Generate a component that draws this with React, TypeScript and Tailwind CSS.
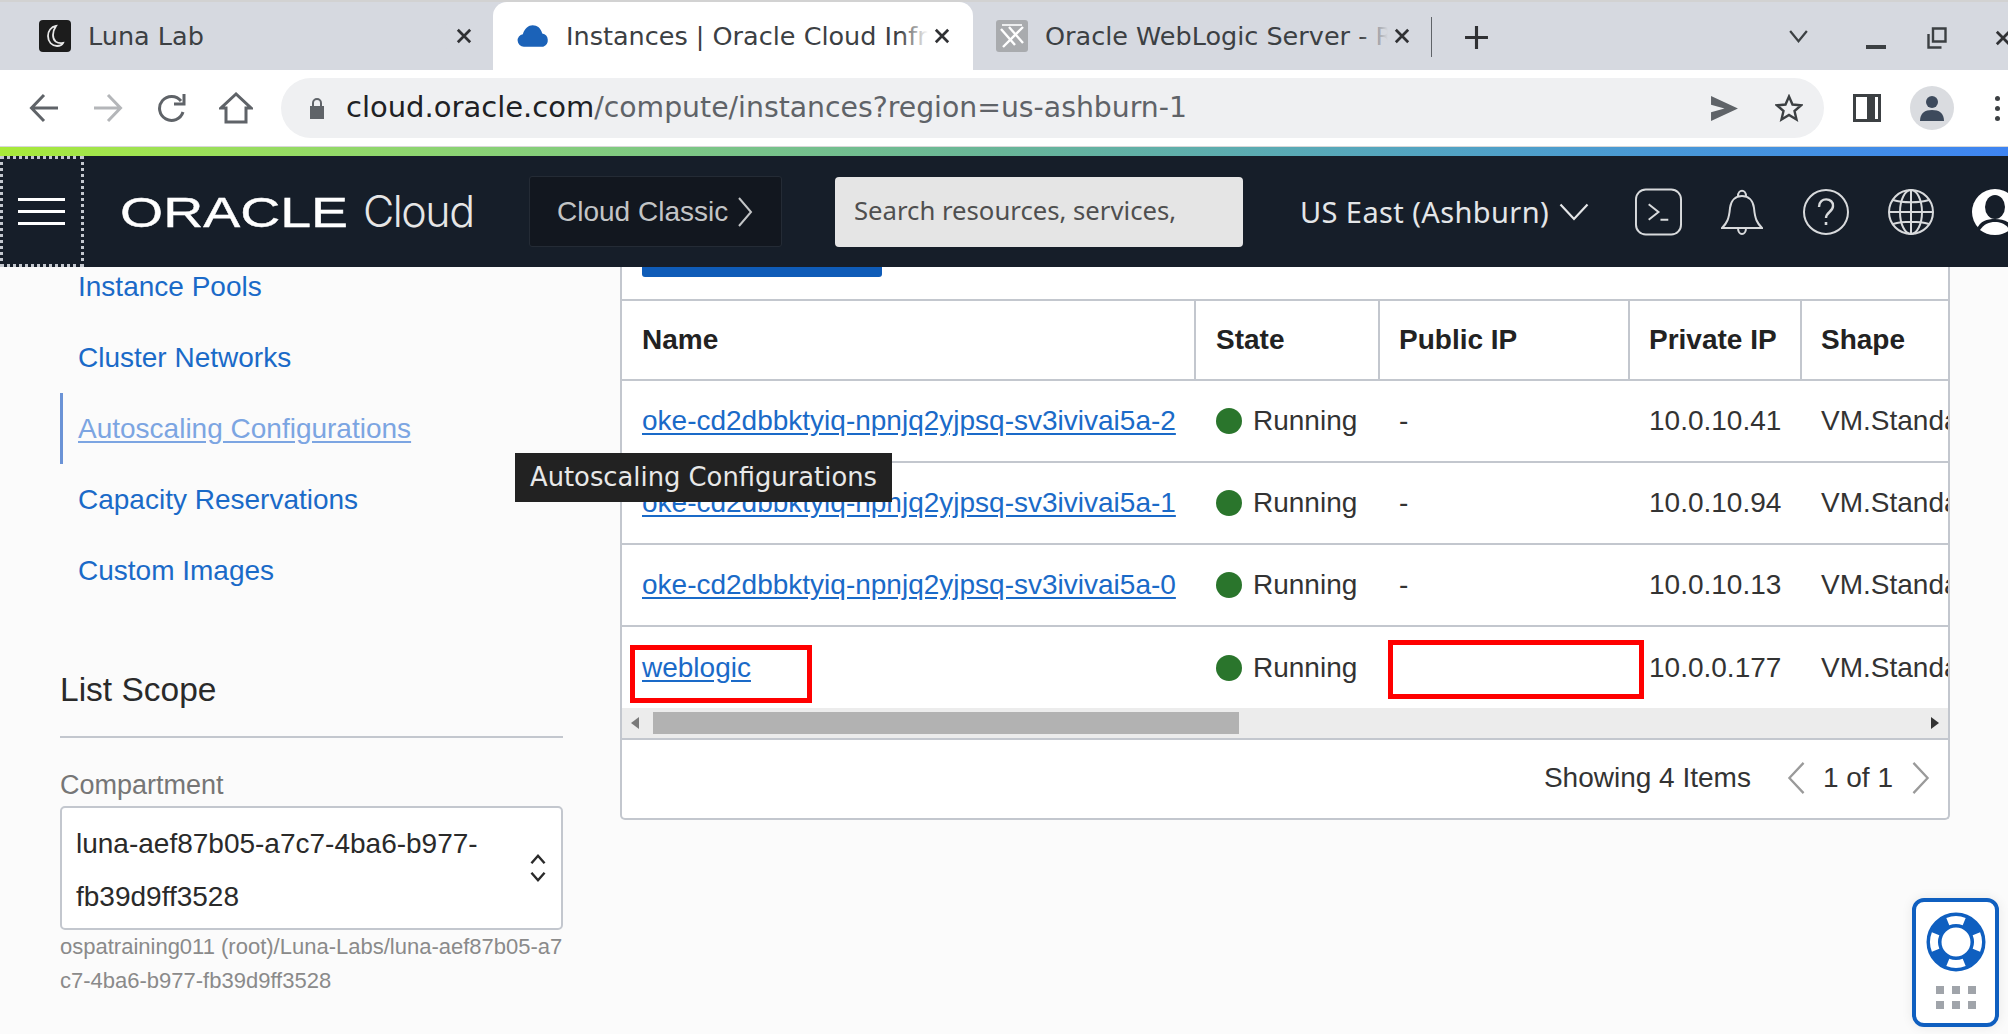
// App.tsx
import React from 'react';

const rows = [
  { name: 'oke-cd2dbbktyiq-npnjq2yjpsq-sv3ivivai5a-2', pub: '-', priv: '10.0.10.41' },
  { name: 'oke-cd2dbbktyiq-npnjq2yjpsq-sv3ivivai5a-1', pub: '-', priv: '10.0.10.94' },
  { name: 'oke-cd2dbbktyiq-npnjq2yjpsq-sv3ivivai5a-0', pub: '-', priv: '10.0.10.13' },
  { name: 'weblogic', pub: '', priv: '10.0.0.177' },
];

const gridCols = 'grid grid-cols-[572px_184px_250px_172px_148px]';

const Tab: React.FC<{ icon: React.ReactNode; title: string; active?: boolean; className: string }> = ({
  icon,
  title,
  active,
  className,
}) => (
  <div className={`relative flex h-full items-center ${className} ${active ? 'rounded-t-[14px] bg-white' : ''}`}>
    <div className="flex w-[34px] shrink-0 items-center justify-center">{icon}</div>
    <div className="relative ml-[16px] flex-1 overflow-hidden whitespace-nowrap text-[25.5px] text-[#3c4043]">
      {title}
      <div
        className={`absolute inset-y-0 right-0 w-[28px] bg-gradient-to-r from-transparent ${
          active ? 'to-white' : 'to-[#d6d9e0]'
        }`}
      />
    </div>
    <svg viewBox="0 0 16 16" className="ml-[5px] h-[18px] w-[18px] shrink-0 text-[#303134]" fill="none" stroke="currentColor" strokeWidth="2.4">
      <path d="M2.5 2.5l11 11M13.5 2.5l-11 11" />
    </svg>
  </div>
);

const LunaIcon = () => (
  <svg viewBox="0 0 32 32" className="h-[32px] w-[32px]">
    <rect width="32" height="32" rx="4" fill="#1c1c1c" />
    <path d="M17 6c-5 1-8 5-8 10 0 6 4 10 9 10 3 0 5-1 6-3-6 1-10-2-10-8 0-3 1-6 3-9z" fill="none" stroke="#e8e8e8" strokeWidth="1.8" />
  </svg>
);

const CloudIcon = () => (
  <svg viewBox="0 0 34 24" className="h-[24px] w-[33px]">
    <path d="M7 23a6.5 6.5 0 0 1-1-12.9C8 4 12 1 16 1c5 0 8.5 3 10 8.5a7 7 0 0 1 1 13.5z" fill="#1b62b8" />
  </svg>
);

const WlsIcon = () => (
  <svg viewBox="0 0 32 32" className="h-[32px] w-[32px]">
    <rect width="32" height="32" rx="3" fill="#a9abae" />
    <path d="M5 9l14 16M13 7l14 16M27 7L7 27" fill="none" stroke="#ffffff" strokeWidth="2.4" />
    <path d="M6 5h20" stroke="#ffffff" strokeWidth="1.6" />
  </svg>
);

const Browser = () => (
  <div className="font-['DejaVu_Sans',sans-serif]">
    {/* tab strip */}
    <div className="flex h-[70px] items-stretch border-t-2 border-[#d2d2d2] bg-[#d6d9e0]">
      <Tab icon={<LunaIcon />} title="Luna Lab" className="ml-[38px] w-[435px]" />
      <Tab icon={<CloudIcon />} title="Instances | Oracle Cloud Infrastructure" active className="ml-[20px] w-[480px] pl-[23px] pr-[22px]" />
      <Tab icon={<WlsIcon />} title="Oracle WebLogic Server - Release Notes" className="ml-[22px] w-[416px]" />
      <div className="ml-[20px] mt-[15px] h-[40px] w-px bg-[#5f6368]" />
      <svg viewBox="0 0 24 24" className="ml-[32px] mt-[23px] h-[25px] w-[25px]" fill="none" stroke="#303134" strokeWidth="3">
        <path d="M12 1v22M1 12h22" />
      </svg>
      <div className="flex-1" />
      <svg viewBox="0 0 20 14" className="mr-[58px] mt-[28px] h-[13px] w-[19px]" fill="none" stroke="#3c4043" strokeWidth="2.4">
        <path d="M1 1l9 11 9-11" />
      </svg>
      <div className="mr-[41px] mt-[43px] h-[4px] w-[20px] bg-[#3c4043]" />
      <svg viewBox="0 0 20 22" className="mr-[47px] mt-[25px] h-[22px] w-[20px]" fill="none" stroke="#3c4043" strokeWidth="2.4">
        <path d="M6 1.5h12.5v13H6zM1.5 7v13.5h13" />
      </svg>
      <svg viewBox="0 0 16 16" className="mr-[-4px] mt-[27px] h-[18px] w-[18px]" fill="none" stroke="#303134" strokeWidth="2.4">
        <path d="M2.5 2.5l11 11M13.5 2.5l-11 11" />
      </svg>
    </div>
    {/* toolbar */}
    <div className="flex h-[77px] items-center border-b border-[#d8d8d8] bg-white">
      <svg viewBox="0 0 30 30" className="ml-[29px] h-[30px] w-[30px]" fill="none" stroke="#5f6368" strokeWidth="3">
        <path d="M29 15H3M15 2L2.5 15 15 28" />
      </svg>
      <svg viewBox="0 0 30 30" className="ml-[34px] h-[30px] w-[30px]" fill="none" stroke="#b4b6b9" strokeWidth="3">
        <path d="M1 15h26M15 2l12.5 13L15 28" />
      </svg>
      <svg viewBox="0 0 30 30" className="ml-[34px] h-[30px] w-[30px]" fill="none" stroke="#5f6368" strokeWidth="3">
        <path d="M26 19a12 12 0 1 1-2-11" />
        <path d="M27 1v10H17" />
      </svg>
      <svg viewBox="0 0 34 32" className="ml-[32px] h-[32px] w-[34px]" fill="none" stroke="#5f6368" strokeWidth="3">
        <path d="M17 2L2 16h5v14h20V16h5z" />
      </svg>
      <div className="ml-[28px] flex h-[60px] w-[1543px] items-center rounded-full bg-[#eff0f2] pl-[28px]">
        <svg viewBox="0 0 16 22" className="h-[22px] w-[16px]">
          <path d="M1 9h14v13H1z" fill="#5f6368" />
          <path d="M4 9V6a4 4 0 0 1 8 0v3" fill="none" stroke="#5f6368" strokeWidth="2" />
        </svg>
        <div className="ml-[21px] whitespace-nowrap text-[29px] text-[#202124]">
          cloud.oracle.com<span className="text-[28.3px] text-[#5f6368]">/compute/instances?region=us-ashburn-1</span>
        </div>
        <div className="flex-1" />
        <svg viewBox="0 0 28 26" className="h-[25px] w-[27px]">
          <path d="M0 0l28 13L0 26v-9l14-4-14-4z" fill="#5f6368" />
        </svg>
        <svg viewBox="0 0 28 28" className="ml-[37px] h-[28px] w-[28px]" fill="none" stroke="#3c4043" strokeWidth="2.4">
          <path d="M14 2.5l3.5 8 8.5.8-6.5 5.7 2 8.5-7.5-4.5-7.5 4.5 2-8.5L2 11.3l8.5-.8z" />
        </svg>
        <div className="w-[21px]" />
      </div>
      <svg viewBox="0 0 28 28" className="ml-[29px] h-[28px] w-[28px]" fill="none" stroke="#3c4043" strokeWidth="3">
        <path d="M1.5 1.5h25v25h-25z" />
        <path d="M18 1.5v25" strokeWidth="8" />
      </svg>
      <div className="ml-[29px] flex h-[44px] w-[44px] items-center justify-center rounded-full bg-[#dadce0]">
        <svg viewBox="0 0 24 26" className="h-[26px] w-[24px]">
          <circle cx="12" cy="7" r="6" fill="#3d4a5c" />
          <path d="M0 26c0-8 5-11 12-11s12 3 12 11z" fill="#3d4a5c" />
        </svg>
      </div>
      <div className="ml-[41px] flex flex-col gap-[5px]">
        <div className="h-[5px] w-[5px] rounded-full bg-[#3c4043]" />
        <div className="h-[5px] w-[5px] rounded-full bg-[#3c4043]" />
        <div className="h-[5px] w-[5px] rounded-full bg-[#3c4043]" />
      </div>
    </div>
  </div>
);

const Header = () => (
  <div className="relative z-10 font-['Liberation_Sans',sans-serif]">
    <div className="h-[9px] bg-gradient-to-r from-[#a8ea38] via-[#68b598] to-[#3e84f2]" />
    <div className="flex h-[111px] items-center bg-[#161e29]">
      <div className="flex h-full w-[84px] shrink-0 flex-col items-center justify-center gap-[9px] border-[3px] border-dotted border-[#c4c8cf] pr-[2px]">
        <div className="h-[3px] w-[47px] bg-white" />
        <div className="h-[3px] w-[47px] bg-white" />
        <div className="h-[3px] w-[47px] bg-white" />
      </div>
      <svg viewBox="0 0 240 40" className="ml-[36px] h-[40px] w-[240px] shrink-0">
        <text x="0" y="35" fontFamily="Liberation Sans" fontSize="42" fill="#ffffff" stroke="#ffffff" strokeWidth="0.4" textLength="228" lengthAdjust="spacingAndGlyphs">
          ORACLE
        </text>
      </svg>
      <div className="ml-[3px] w-[112px] shrink-0 whitespace-nowrap font-['Inter',sans-serif] text-[43px] font-light tracking-[-1.5px] text-[#e6e6e6]">Cloud</div>
      <div className="ml-[54px] flex h-[71px] w-[253px] shrink-0 items-center rounded-[3px] border border-[#242b35] bg-[#12171f] pl-[27px] text-[28px] text-[#c2c4c6]">
        Cloud Classic
        <svg viewBox="0 0 16 32" className="ml-[9px] h-[32px] w-[16px]" fill="none" stroke="#c2c4c6" strokeWidth="2">
          <path d="M2 2l12 14L2 30" />
        </svg>
      </div>
      <div className="ml-[53px] flex h-[70px] w-[408px] shrink-0 items-center whitespace-nowrap rounded-[4px] bg-[#e5e5e5] pl-[19px] font-['Noto_Sans',sans-serif] text-[25.7px] text-[#4f4f4f]">
        Search resources, services,
      </div>
      <div className="ml-[57px] shrink-0 whitespace-nowrap font-['Noto_Sans',sans-serif] text-[29px] tracking-[0.4px] text-[#e4e6e8]">US East (Ashburn)</div>
      <svg viewBox="0 0 30 18" className="ml-[10px] h-[18px] w-[30px] shrink-0" fill="none" stroke="#e4e6e8" strokeWidth="2.2">
        <path d="M1.5 1.5L15 16 28.5 1.5" />
      </svg>
      <svg viewBox="0 0 48 48" className="ml-[46px] h-[48px] w-[47px] shrink-0" fill="none" stroke="#d8dadc" strokeWidth="2">
        <rect x="1" y="1" width="46" height="46" rx="10" />
        <path d="M14 16l10 8-10 8M26 32h8" />
      </svg>
      <svg viewBox="0 0 42 46" className="ml-[39px] h-[46px] w-[42px] shrink-0" fill="none" stroke="#d8dadc" strokeWidth="2">
        <path d="M1 39c5-5 7-9 8-20 1-8 6-12 12-12s11 4 12 12c1 11 3 15 8 20z" />
        <path d="M17 7c0-7 8-7 8 0M17 39c0 8 8 8 8 0" />
      </svg>
      <svg viewBox="0 0 46 46" className="ml-[40px] h-[46px] w-[46px] shrink-0" fill="none" stroke="#d8dadc" strokeWidth="2">
        <circle cx="23" cy="23" r="22" />
        <path d="M16 18c0-11 15-9 14-1 0 6-7 6-7 12" strokeWidth="2.4" />
        <path d="M23 33v3" strokeWidth="2.6" />
      </svg>
      <svg viewBox="0 0 46 46" className="ml-[39px] h-[46px] w-[46px] shrink-0" fill="none" stroke="#d8dadc" strokeWidth="2">
        <circle cx="23" cy="23" r="22" />
        <ellipse cx="23" cy="23" rx="11" ry="22" />
        <path d="M23 1v44M1 23h44M5 11c10 3 26 3 36 0M5 35c10-3 26-3 36 0" />
      </svg>
      <svg viewBox="0 0 46 46" className="ml-[38px] h-[46px] w-[46px] shrink-0">
        <circle cx="23" cy="23" r="23" fill="#ffffff" />
        <ellipse cx="23" cy="18" rx="10" ry="12" fill="#161e29" />
        <path d="M5 40c3-8 10-10 18-10s15 2 18 10c-5 5-11 6-18 6s-13-1-18-6z" fill="#161e29" />
        <path d="M8 41c4-6 9-8 15-8s11 2 15 8c-4 3-9 5-15 5s-11-2-15-5z" fill="#ffffff" />
      </svg>
    </div>
  </div>
);

const navItems = ['Instance Pools', 'Cluster Networks', 'Autoscaling Configurations', 'Capacity Reservations', 'Custom Images'];

const Sidebar = () => (
  <div className="w-[620px] shrink-0 pl-[60px]">
    <div className="-mt-[16px]">
      {navItems.map((item) =>
        item === 'Autoscaling Configurations' ? (
          <div key={item} className="flex h-[71px] items-center border-l-[3px] border-[#6b93d6] pl-[15px] text-[#7ca5e2] underline underline-offset-[3px]">
            {item}
          </div>
        ) : (
          <div key={item} className="flex h-[71px] items-center pl-[18px] text-[#1a6ac8]">
            {item}
          </div>
        ),
      )}
    </div>
    <div className="w-[503px]">
      <div className="mt-[65px] border-b-2 border-[#c3c7ce] pb-[28px] text-[33.5px] leading-[37px] text-[#2a2a2a]">List Scope</div>
      <div className="mt-[30px] text-[27px] leading-[34px] text-[#767676]">Compartment</div>
      <div className="mt-[4px] flex h-[124px] items-center justify-between rounded-[5px] border-2 border-[#c3c7ce] bg-white pl-[14px] pr-[14px]">
        <div className="w-[440px] pt-[3px] leading-[53px] text-[#2a2a2a]">luna-aef87b05-a7c7-4ba6-b977-fb39d9ff3528</div>
        <svg viewBox="0 0 18 32" className="h-[30px] w-[18px]" fill="none" stroke="#2a2a2a" strokeWidth="2.6">
          <path d="M2 11l7-8 7 8M2 21l7 8 7-8" />
        </svg>
      </div>
      <div className="break-all text-[22px] leading-[34px] text-[#8a8a8a]">
        ospatraining011 (root)/Luna-Labs/luna-aef87b05-a7c7-4ba6-b977-fb39d9ff3528
      </div>
    </div>
  </div>
);

const LifeRing = () => (
  <svg viewBox="0 0 60 60" className="h-[60px] w-[60px]">
    <circle cx="30" cy="30" r="22" fill="none" stroke="#0f5fc0" strokeWidth="15" />
    <g fill="none" stroke="#ffffff" strokeWidth="8">
      <path d="M21.8 9.6a22 22 0 0 1 16.4 0" />
      <path d="M50.4 21.8a22 22 0 0 1 0 16.4" />
      <path d="M38.2 50.4a22 22 0 0 1-16.4 0" />
      <path d="M9.6 38.2a22 22 0 0 1 0-16.4" />
    </g>
  </svg>
);

const InstancesTable = () => (
  <div className="mr-[58px] h-[553px] flex-1 overflow-hidden rounded-b-[5px] border-x-2 border-b-2 border-[#c3c7ce] bg-white">
    <div className="ml-[20px] h-[10px] w-[240px] rounded-b-[3px] bg-[#0f5cb8]" />
    <div className="h-[22px]" />
    <div className={`${gridCols} h-[82px] border-y-2 border-[#c3c7ce] font-bold text-[#222222]`}>
      <div className="flex items-center pl-[20px]">Name</div>
      <div className="flex items-center border-l-2 border-[#c3c7ce] pl-[20px]">State</div>
      <div className="flex items-center border-l-2 border-[#c3c7ce] pl-[19px]">Public IP</div>
      <div className="flex items-center border-l-2 border-[#c3c7ce] pl-[19px]">Private IP</div>
      <div className="flex items-center whitespace-nowrap border-l-2 border-[#c3c7ce] pl-[19px]">Shape</div>
    </div>
    {rows.map((row, i) => (
      <div key={row.name} className={`${gridCols} items-center text-[#333333] ${i < 3 ? 'h-[82px] border-b-2 border-[#c3c7ce]' : 'h-[81px]'}`}>
        <div className="pl-[20px] text-[#1a6ac8] underline underline-offset-[3px]">{row.name}</div>
        <div className="flex items-center pl-[22px]">
          <div className="h-[26px] w-[26px] rounded-full bg-[#2a752c]" />
          <span className="ml-[11px]">Running</span>
        </div>
        <div className="pl-[21px]">{row.pub}</div>
        <div className="pl-[21px]">{row.priv}</div>
        <div className="whitespace-nowrap pl-[21px]">VM.Standard.E4.Flex</div>
      </div>
    ))}
    {/* horizontal scrollbar */}
    <div className="flex h-[32px] items-center border-b-2 border-[#c3c7ce] bg-[#ececec] px-[9px]">
      <svg viewBox="0 0 8 12" className="h-[12px] w-[8px]">
        <path d="M8 0v12L0 6z" fill="#7a7a7a" />
      </svg>
      <div className="ml-[14px] h-[22px] w-[586px] bg-[#b2b2b2]" />
      <div className="flex-1" />
      <svg viewBox="0 0 8 12" className="h-[12px] w-[8px]">
        <path d="M0 0v12l8-6z" fill="#333333" />
      </svg>
    </div>
    <div className="flex h-[76px] items-center justify-end pr-[17px] text-[#333333]">
      <span>Showing 4 Items</span>
      <svg viewBox="0 0 20 36" className="ml-[35px] h-[34px] w-[20px]" fill="none" stroke="#9a9a9a" strokeWidth="2.4">
        <path d="M18 2L3 18l15 16" />
      </svg>
      <span className="ml-[17px]">1 of 1</span>
      <svg viewBox="0 0 20 36" className="ml-[18px] h-[34px] w-[20px]" fill="none" stroke="#9a9a9a" strokeWidth="2.4">
        <path d="M2 2l15 16L2 34" />
      </svg>
    </div>
  </div>
);

const HelpWidget = () => (
  <div className="absolute left-[1912px] top-[631px] flex h-[129px] w-[87px] flex-col items-center rounded-[12px] border-[4px] border-[#0f5fc0] bg-white pt-[10px] shadow-[0_0_12px_rgba(0,0,0,0.08)]">
    <LifeRing />
    <div className="mt-[14px] grid grid-cols-3 gap-x-[8px] gap-y-[7px]">
      {[0, 1, 2, 3, 4, 5].map((n) => (
        <div key={n} className="h-[8px] w-[8px] bg-[#a0a4aa]" />
      ))}
    </div>
  </div>
);

const App: React.FC = () => {
  return (
    <div className="flex h-[1034px] w-[2008px] flex-col overflow-hidden bg-[#fbfbfb]">
      <Browser />
      <Header />
      <div className="relative flex flex-1 text-[28px] font-['Liberation_Sans',sans-serif]">
        <Sidebar />
        <InstancesTable />
        {/* tooltip */}
        <div className="absolute left-[515px] top-[186px] flex h-[49px] w-[377px] items-center justify-center whitespace-nowrap bg-[#222222] font-['DejaVu_Sans',sans-serif] text-[25.8px] text-[#e8e8e8]">
          Autoscaling Configurations
        </div>
        {/* red annotation boxes */}
        <div className="absolute left-[630px] top-[378px] h-[58px] w-[182px] border-[5px] border-[#ff0000]" />
        <div className="absolute left-[1388px] top-[373px] h-[59px] w-[256px] border-[5px] border-[#ff0000]" />
        <HelpWidget />
      </div>
    </div>
  );
};

export default App;
